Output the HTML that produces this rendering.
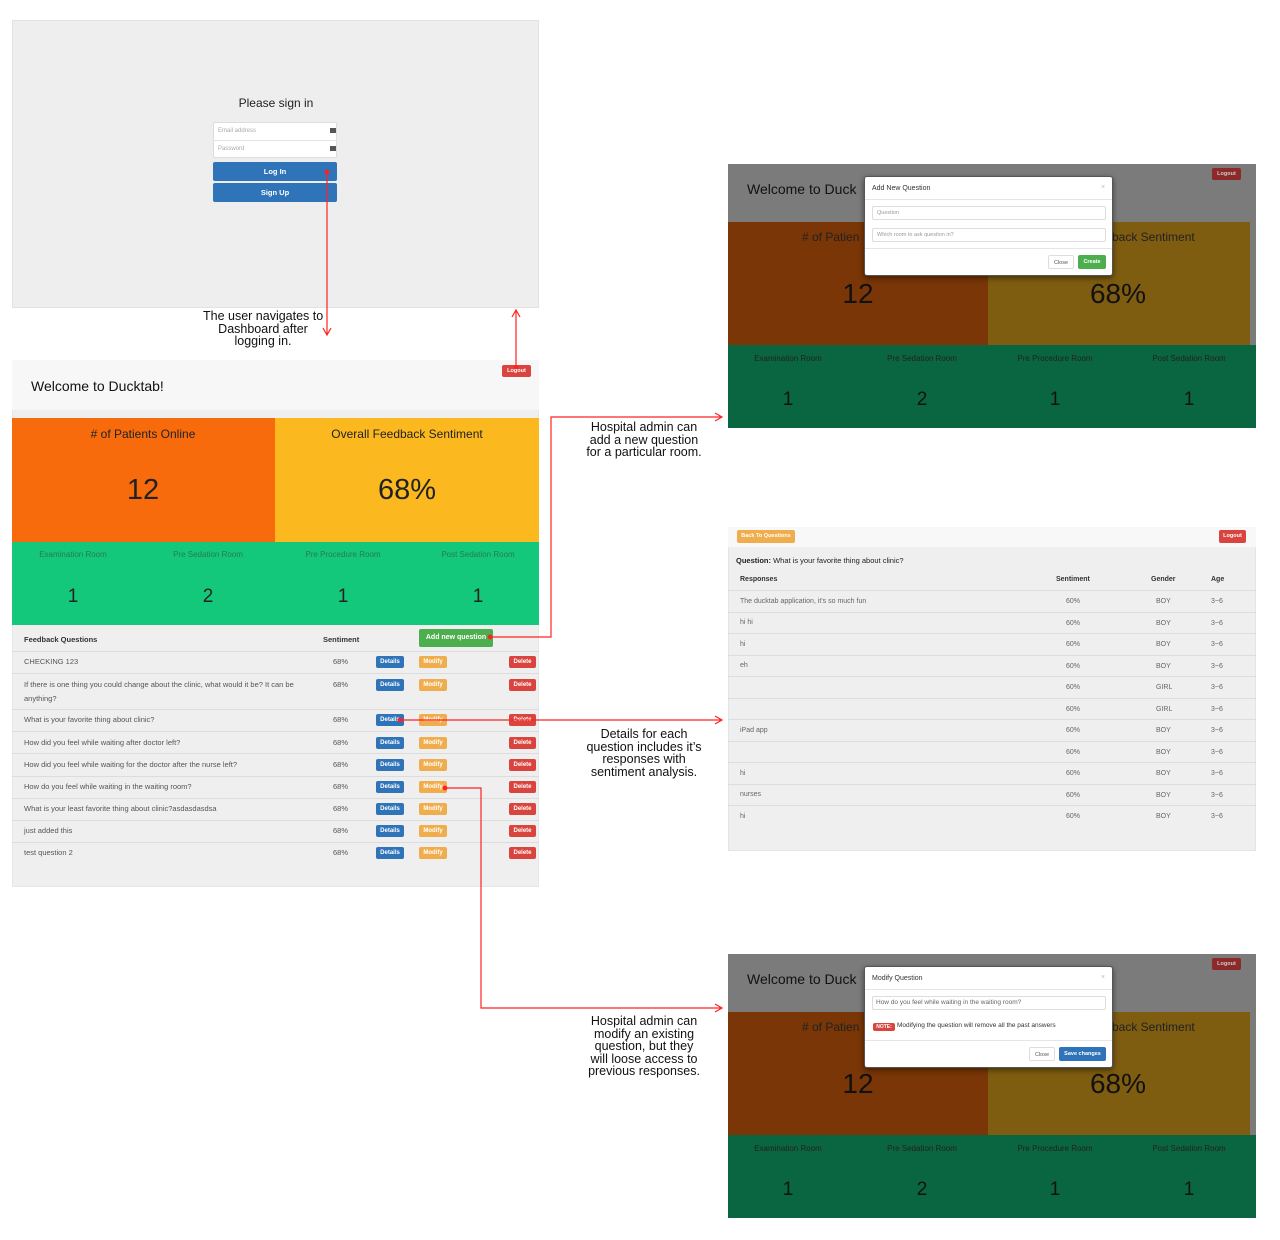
<!DOCTYPE html>
<html><head><meta charset="utf-8"><style>
*{margin:0;padding:0;box-sizing:border-box}
body{width:1280px;height:1240px;background:#fff;position:relative;font-family:"Liberation Sans",sans-serif;overflow:hidden;color:#333}
div,span{position:absolute}
.t{white-space:nowrap;line-height:1}
.c{transform:translateX(-50%)}
.btn{border-radius:2px;color:#fff;font-weight:bold;font-size:6px;text-align:center;line-height:12px;height:12px}
.bl{background:#2f73b8}.or{background:#f0ad4e}.rd{background:#d9443f}.gr{background:#4cae4c}
.cap{font-family:"Liberation Sans",sans-serif;font-size:12.5px;color:#111;text-align:center;line-height:12.5px;white-space:nowrap}
.row{left:12px;width:527px;height:1px;background:#dcdcdc}
.q{font-size:7.5px;color:#555}
.s{font-size:7.5px;color:#555}
.dr{left:728px;width:528px;height:1px;background:#dcdcdc}
.d{font-size:7px;color:#666}
.gl{font-size:8px;color:#2a7a50}
</style></head><body>

<div style="left:12px;top:20px;width:527px;height:288px;background:#eee;border:1px solid #e2e2e2"></div>
<div class="t c" style="left:276px;top:97px;font-size:12px;color:#222">Please sign in</div>
<div style="left:213px;top:122px;width:124px;height:36px;background:#fff;border:1px solid #ddd;border-radius:2px"></div>
<div style="left:213px;top:140px;width:124px;height:1px;background:#e4e4e4"></div>
<div class="t" style="left:218px;top:128px;font-size:6px;color:#aaa">Email address</div>
<div class="t" style="left:218px;top:146px;font-size:6px;color:#aaa">Password</div>
<div style="left:330px;top:128px;width:6px;height:5px;background:#555"></div>
<div style="left:330px;top:146px;width:6px;height:5px;background:#555"></div>
<div class="btn bl" style="left:213px;top:162px;width:124px;height:19px;line-height:19px;font-size:7.5px">Log In</div>
<div class="btn bl" style="left:213px;top:183px;width:124px;height:19px;line-height:19px;font-size:7.5px">Sign Up</div>

<div class="cap" style="left:203px;top:310px;width:120px">The user navigates to<br>Dashboard after<br>logging in.</div>

<div style="left:12px;top:360px;width:527px;height:527px;background:#efefef;border:1px solid #e6e6e6"></div>
<div style="left:12px;top:360px;width:527px;height:50px;background:#f7f7f7"></div>
<div class="t" style="left:31px;top:379px;font-size:14px;color:#111">Welcome to Ducktab!</div>
<div class="btn rd" style="left:502px;top:365px;width:29px;height:12px;font-size:5.5px">Logout</div>
<div style="left:12px;top:418px;width:263px;height:124px;background:#f76b0c"></div>
<div style="left:275px;top:418px;width:264px;height:124px;background:#fcb81f"></div>
<div class="t c" style="left:143px;top:428px;font-size:12px;color:#222"># of Patients Online</div>
<div class="t c" style="left:407px;top:428px;font-size:12px;color:#222">Overall Feedback Sentiment</div>
<div class="t c" style="left:143px;top:476px;font-size:29px;color:#222">12</div>
<div class="t c" style="left:407px;top:476px;font-size:29px;color:#222">68%</div>
<div style="left:12px;top:542px;width:527px;height:83px;background:#13c87a"></div>
<div class="t c gl" style="left:73px;top:551px">Examination Room</div>
<div class="t c gl" style="left:208px;top:551px">Pre Sedation Room</div>
<div class="t c gl" style="left:343px;top:551px">Pre Procedure Room</div>
<div class="t c gl" style="left:478px;top:551px">Post Sedation Room</div>
<div class="t c" style="left:73px;top:587px;font-size:19px;color:#222">1</div>
<div class="t c" style="left:208px;top:587px;font-size:19px;color:#222">2</div>
<div class="t c" style="left:343px;top:587px;font-size:19px;color:#222">1</div>
<div class="t c" style="left:478px;top:587px;font-size:19px;color:#222">1</div>

<div class="t" style="left:24px;top:636px;font-size:7.5px;font-weight:bold;color:#333">Feedback Questions</div>
<div class="t" style="left:323px;top:636px;font-size:7.5px;font-weight:bold;color:#333">Sentiment</div>
<div class="btn gr" style="left:419px;top:629px;width:74px;height:18px;line-height:18px;font-size:7px">Add new question</div>
<div class="row" style="top:651px"></div>
<div class="row" style="top:673px"></div>
<div class="row" style="top:709px"></div>
<div class="row" style="top:731px"></div>
<div class="row" style="top:753px"></div>
<div class="row" style="top:776px"></div>
<div class="row" style="top:798px"></div>
<div class="row" style="top:820px"></div>
<div class="row" style="top:842px"></div>

<div class="t q" style="left:24px;top:658px">CHECKING 123</div>
<div class="t q" style="left:24px;top:681px">If there is one thing you could change about the clinic, what would it be? It can be</div>
<div class="t q" style="left:24px;top:695px">anything?</div>
<div class="t q" style="left:24px;top:716px">What is your favorite thing about clinic?</div>
<div class="t q" style="left:24px;top:739px">How did you feel while waiting after doctor left?</div>
<div class="t q" style="left:24px;top:761px">How did you feel while waiting for the doctor after the nurse left?</div>
<div class="t q" style="left:24px;top:783px">How do you feel while waiting in the waiting room?</div>
<div class="t q" style="left:24px;top:805px">What is your least favorite thing about clinic?asdasdasdsa</div>
<div class="t q" style="left:24px;top:827px">just added this</div>
<div class="t q" style="left:24px;top:849px">test question 2</div>

<div class="t s" style="left:333px;top:658px">68%</div>
<div class="t s" style="left:333px;top:681px">68%</div>
<div class="t s" style="left:333px;top:716px">68%</div>
<div class="t s" style="left:333px;top:739px">68%</div>
<div class="t s" style="left:333px;top:761px">68%</div>
<div class="t s" style="left:333px;top:783px">68%</div>
<div class="t s" style="left:333px;top:805px">68%</div>
<div class="t s" style="left:333px;top:827px">68%</div>
<div class="t s" style="left:333px;top:849px">68%</div>

<div class="btn bl" style="left:376px;top:656px;width:28px">Details</div><div class="btn or" style="left:419px;top:656px;width:28px">Modify</div><div class="btn rd" style="left:509px;top:656px;width:27px">Delete</div>
<div class="btn bl" style="left:376px;top:679px;width:28px">Details</div><div class="btn or" style="left:419px;top:679px;width:28px">Modify</div><div class="btn rd" style="left:509px;top:679px;width:27px">Delete</div>
<div class="btn bl" style="left:376px;top:714px;width:28px">Details</div><div class="btn or" style="left:419px;top:714px;width:28px">Modify</div><div class="btn rd" style="left:509px;top:714px;width:27px">Delete</div>
<div class="btn bl" style="left:376px;top:737px;width:28px">Details</div><div class="btn or" style="left:419px;top:737px;width:28px">Modify</div><div class="btn rd" style="left:509px;top:737px;width:27px">Delete</div>
<div class="btn bl" style="left:376px;top:759px;width:28px">Details</div><div class="btn or" style="left:419px;top:759px;width:28px">Modify</div><div class="btn rd" style="left:509px;top:759px;width:27px">Delete</div>
<div class="btn bl" style="left:376px;top:781px;width:28px">Details</div><div class="btn or" style="left:419px;top:781px;width:28px">Modify</div><div class="btn rd" style="left:509px;top:781px;width:27px">Delete</div>
<div class="btn bl" style="left:376px;top:803px;width:28px">Details</div><div class="btn or" style="left:419px;top:803px;width:28px">Modify</div><div class="btn rd" style="left:509px;top:803px;width:27px">Delete</div>
<div class="btn bl" style="left:376px;top:825px;width:28px">Details</div><div class="btn or" style="left:419px;top:825px;width:28px">Modify</div><div class="btn rd" style="left:509px;top:825px;width:27px">Delete</div>
<div class="btn bl" style="left:376px;top:847px;width:28px">Details</div><div class="btn or" style="left:419px;top:847px;width:28px">Modify</div><div class="btn rd" style="left:509px;top:847px;width:27px">Delete</div>

<!-- Right top -->
<div style="left:728px;top:164px;width:528px;height:264px;background:#0a6640"></div>
<div style="left:728px;top:164px;width:528px;height:58px;background:#7b7b7b"></div>
<div class="t" style="left:747px;top:182px;font-size:14px;color:#111">Welcome to Duck</div>
<div class="btn" style="left:1212px;top:168px;width:29px;height:12px;background:#8b2a28;color:#ccc;font-size:5.5px">Logout</div>
<div style="left:728px;top:222px;width:260px;height:123px;background:#7a3606"></div>
<div style="left:988px;top:222px;width:262px;height:123px;background:#7e5c10"></div>
<div style="left:1250px;top:222px;width:6px;height:123px;background:#7b7b7b"></div>
<div class="t" style="left:802px;top:231px;font-size:12px;color:#222"># of Patien</div>
<div class="t" style="left:1112px;top:231px;font-size:12px;color:#222">back Sentiment</div>
<div class="t c" style="left:858px;top:280px;font-size:28px;color:#111">12</div>
<div class="t c" style="left:1118px;top:280px;font-size:28px;color:#111">68%</div>
<div class="t c" style="left:788px;top:355px;font-size:8px;color:#222">Examination Room</div>
<div class="t c" style="left:922px;top:355px;font-size:8px;color:#222">Pre Sedation Room</div>
<div class="t c" style="left:1055px;top:355px;font-size:8px;color:#222">Pre Procedure Room</div>
<div class="t c" style="left:1189px;top:355px;font-size:8px;color:#222">Post Sedation Room</div>
<div class="t c" style="left:788px;top:390px;font-size:19px;color:#111">1</div>
<div class="t c" style="left:922px;top:390px;font-size:19px;color:#111">2</div>
<div class="t c" style="left:1055px;top:390px;font-size:19px;color:#111">1</div>
<div class="t c" style="left:1189px;top:390px;font-size:19px;color:#111">1</div>
<div style="left:864px;top:176px;width:249px;height:100px;background:#fff;border:1px solid #555;border-radius:3px;box-shadow:0 2px 6px rgba(0,0,0,.5)"></div>
<div class="t" style="left:872px;top:185px;font-size:7px;color:#333">Add New Question</div>
<div class="t" style="left:1101px;top:184px;font-size:7px;color:#bbb">×</div>
<div style="left:865px;top:199px;width:247px;height:1px;background:#e5e5e5"></div>
<div style="left:872px;top:206px;width:234px;height:14px;border:1px solid #ddd;border-radius:2px"></div>
<div class="t" style="left:877px;top:211px;font-size:5.5px;color:#999">Question</div>
<div style="left:872px;top:228px;width:234px;height:14px;border:1px solid #ddd;border-radius:2px"></div>
<div class="t" style="left:877px;top:233px;font-size:5.5px;color:#999">Which room to ask question in?</div>
<div style="left:865px;top:248px;width:247px;height:1px;background:#e5e5e5"></div>
<div class="btn" style="left:1048px;top:255px;width:26px;height:14px;line-height:14px;border:1px solid #ddd;color:#555;font-weight:normal;font-size:5.5px">Close</div>
<div class="btn gr" style="left:1078px;top:255px;width:28px;height:14px;line-height:14px;font-size:5.5px">Create</div>

<div class="cap" style="left:583px;top:421px;width:122px">Hospital admin can<br>add a new question<br>for a particular room.</div>

<!-- Details page -->
<div style="left:728px;top:527px;width:528px;height:324px;background:#efefef;border:1px solid #e4e4e4"></div>
<div style="left:728px;top:527px;width:528px;height:20px;background:#f8f8f8"></div>
<div class="btn or" style="left:737px;top:530px;width:58px;height:13px;line-height:13px;font-size:5.5px">Back To Questions</div>
<div class="btn rd" style="left:1219px;top:530px;width:27px;height:13px;line-height:13px;font-size:5.5px">Logout</div>
<div class="t" style="left:736px;top:557px;font-size:7.5px;color:#222"><b>Question:</b> What is your favorite thing about clinic?</div>
<div class="t" style="left:740px;top:576px;font-size:7px;color:#333;font-weight:bold">Responses</div>
<div class="t" style="left:1056px;top:576px;font-size:7px;color:#333;font-weight:bold">Sentiment</div>
<div class="t" style="left:1151px;top:576px;font-size:7px;color:#333;font-weight:bold">Gender</div>
<div class="t" style="left:1211px;top:576px;font-size:7px;color:#333;font-weight:bold">Age</div>
<div class="dr" style="top:590px"></div><div class="dr" style="top:612px"></div><div class="dr" style="top:633px"></div><div class="dr" style="top:655px"></div><div class="dr" style="top:676px"></div><div class="dr" style="top:698px"></div><div class="dr" style="top:719px"></div><div class="dr" style="top:741px"></div><div class="dr" style="top:762px"></div><div class="dr" style="top:784px"></div><div class="dr" style="top:805px"></div>
<div class="t d" style="left:740px;top:598px">The ducktab application, it's so much fun</div>
<div class="t d" style="left:740px;top:619px">hi hi</div>
<div class="t d" style="left:740px;top:641px">hi</div>
<div class="t d" style="left:740px;top:662px">eh</div>
<div class="t d" style="left:740px;top:727px">iPad app</div>
<div class="t d" style="left:740px;top:770px">hi</div>
<div class="t d" style="left:740px;top:791px">nurses</div>
<div class="t d" style="left:740px;top:813px">hi</div>
<div class="t d" style="left:1066px;top:591px;line-height:21.5px;white-space:pre">60%
60%
60%
60%
60%
60%
60%
60%
60%
60%
60%</div>
<div class="t d" style="left:1156px;top:591px;line-height:21.5px;white-space:pre">BOY
BOY
BOY
BOY
GIRL
GIRL
BOY
BOY
BOY
BOY
BOY</div>
<div class="t d" style="left:1211px;top:591px;line-height:21.5px;white-space:pre">3~6
3~6
3~6
3~6
3~6
3~6
3~6
3~6
3~6
3~6
3~6</div>

<div class="cap" style="left:583px;top:728px;width:122px">Details for each<br>question includes it’s<br>responses with<br>sentiment analysis.</div>

<!-- Bottom -->
<div style="left:728px;top:954px;width:528px;height:264px;background:#0a6640"></div>
<div style="left:728px;top:954px;width:528px;height:58px;background:#7b7b7b"></div>
<div class="t" style="left:747px;top:972px;font-size:14px;color:#111">Welcome to Duck</div>
<div class="btn" style="left:1212px;top:958px;width:29px;height:12px;background:#8b2a28;color:#ccc;font-size:5.5px">Logout</div>
<div style="left:728px;top:1012px;width:260px;height:123px;background:#7a3606"></div>
<div style="left:988px;top:1012px;width:262px;height:123px;background:#7e5c10"></div>
<div style="left:1250px;top:1012px;width:6px;height:123px;background:#7b7b7b"></div>
<div class="t" style="left:802px;top:1021px;font-size:12px;color:#222"># of Patien</div>
<div class="t" style="left:1112px;top:1021px;font-size:12px;color:#222">back Sentiment</div>
<div class="t c" style="left:858px;top:1070px;font-size:28px;color:#111">12</div>
<div class="t c" style="left:1118px;top:1070px;font-size:28px;color:#111">68%</div>
<div class="t c" style="left:788px;top:1145px;font-size:8px;color:#222">Examination Room</div>
<div class="t c" style="left:922px;top:1145px;font-size:8px;color:#222">Pre Sedation Room</div>
<div class="t c" style="left:1055px;top:1145px;font-size:8px;color:#222">Pre Procedure Room</div>
<div class="t c" style="left:1189px;top:1145px;font-size:8px;color:#222">Post Sedation Room</div>
<div class="t c" style="left:788px;top:1180px;font-size:19px;color:#111">1</div>
<div class="t c" style="left:922px;top:1180px;font-size:19px;color:#111">2</div>
<div class="t c" style="left:1055px;top:1180px;font-size:19px;color:#111">1</div>
<div class="t c" style="left:1189px;top:1180px;font-size:19px;color:#111">1</div>
<div style="left:864px;top:966px;width:249px;height:102px;background:#fff;border:1px solid #555;border-radius:3px;box-shadow:0 2px 6px rgba(0,0,0,.5)"></div>
<div class="t" style="left:872px;top:975px;font-size:7px;color:#333">Modify Question</div>
<div class="t" style="left:1101px;top:974px;font-size:7px;color:#bbb">×</div>
<div style="left:865px;top:989px;width:247px;height:1px;background:#e5e5e5"></div>
<div style="left:872px;top:996px;width:234px;height:14px;border:1px solid #ddd;border-radius:2px"></div>
<div class="t" style="left:876px;top:1000px;font-size:6.5px;color:#666">How do you feel while waiting in the waiting room?</div>
<div class="btn rd" style="left:873px;top:1023px;width:22px;height:8px;line-height:8px;font-size:5px">NOTE:</div>
<div class="t" style="left:897px;top:1023px;font-size:6.5px;color:#333">Modifying the question will remove all the past answers</div>
<div style="left:865px;top:1040px;width:247px;height:1px;background:#e5e5e5"></div>
<div class="btn" style="left:1029px;top:1047px;width:26px;height:14px;line-height:14px;border:1px solid #ddd;color:#555;font-weight:normal;font-size:5.5px">Close</div>
<div class="btn bl" style="left:1059px;top:1047px;width:47px;height:14px;line-height:14px;font-size:5.5px">Save changes</div>

<div class="cap" style="left:583px;top:1015px;width:122px">Hospital admin can<br>modify an existing<br>question, but they<br>will loose access to<br>previous responses.</div>

<svg style="position:absolute;left:0;top:0" width="1280" height="1240" fill="none" stroke="#f22" stroke-width="1.2">
<circle cx="327" cy="172" r="1.8" fill="#f22"/>
<path d="M327 172V335M323 328l4 7 4-7"/>
<circle cx="516" cy="367" r="1.5" fill="#f22"/>
<path d="M516 367V310M512 317l4-7 4 7"/>
<circle cx="490" cy="637" r="1.8" fill="#f22"/>
<path d="M490 637H551V417H722M715 413l7 4-7 4"/>
<circle cx="400" cy="720" r="1.8" fill="#f22"/>
<path d="M400 720H722M715 716l7 4-7 4"/>
<circle cx="445" cy="788" r="1.8" fill="#f22"/>
<path d="M445 788H481V1008H722M715 1004l7 4-7 4"/>
</svg>
</body></html>
